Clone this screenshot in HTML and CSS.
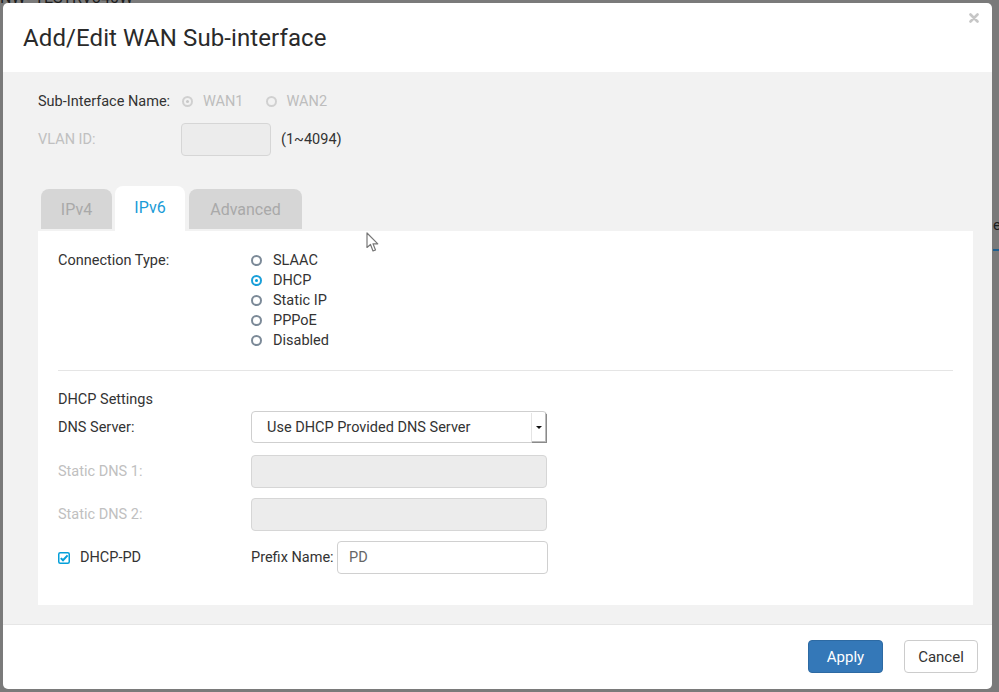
FILE: index.html
```html
<!DOCTYPE html>
<html>
<head>
<meta charset="utf-8">
<link rel="stylesheet" href="styles.css">
</head>
<body>
<div class="backdrop">
  <span class="bg-top">NW=TESTRV340W</span>
  <span class="bg-right">e</span>
  <span class="bg-line"></span>
</div>
<div class="modal">
  <div class="modal-header">
    <h1 class="title">Add/Edit WAN Sub-interface</h1>
    <span class="close"><svg width="10" height="10" viewBox="0 0 10 10"><path d="M1.5 1.5 L8.5 8.5 M8.5 1.5 L1.5 8.5" stroke="#c6c6c6" stroke-width="2.6" stroke-linecap="round"/></svg></span>
  </div>
  <div class="modal-body">
    <div class="row row-name">
      <span class="lbl lbl-top">Sub-Interface Name:</span>
      <span class="radio-item disabled"><span class="radio checked"></span>WAN1</span>
      <span class="radio-item disabled wan2"><span class="radio"></span>WAN2</span>
    </div>
    <div class="row row-vlan">
      <span class="lbl lbl-top disabled-text">VLAN ID:</span>
      <span class="input input-vlan disabled-input"></span>
      <span class="hint">(1~4094)</span>
    </div>
    <div class="tabs">
      <span class="tab tab-ipv4">IPv4</span>
      <span class="tab active">IPv6</span>
      <span class="tab tab-adv">Advanced</span>
    </div>
    <div class="panel">
      <div class="conn">
        <span class="lbl lbl-panel">Connection Type:</span>
        <div class="radio-list">
          <span class="radio-item"><span class="radio"></span>SLAAC</span>
          <span class="radio-item"><span class="radio checked"></span>DHCP</span>
          <span class="radio-item"><span class="radio"></span>Static IP</span>
          <span class="radio-item"><span class="radio"></span>PPPoE</span>
          <span class="radio-item"><span class="radio"></span>Disabled</span>
        </div>
      </div>
      <div class="divider"></div>
      <div class="section-title">DHCP Settings</div>
      <div class="frow frow-dns">
        <span class="lbl lbl-panel">DNS Server:</span>
        <span class="select">
          <span class="select-text">Use DHCP Provided DNS Server</span>
          <span class="select-btn"><span class="caret"></span></span>
        </span>
      </div>
      <div class="frow frow-s1">
        <span class="lbl lbl-panel disabled-text">Static DNS 1:</span>
        <span class="input input-wide disabled-input"></span>
      </div>
      <div class="frow frow-s2">
        <span class="lbl lbl-panel disabled-text">Static DNS 2:</span>
        <span class="input input-wide disabled-input"></span>
      </div>
      <div class="frow frow-pd">
        <span class="lbl lbl-panel pd-label">
          <span class="checkbox">
            <svg width="12" height="12" viewBox="0 0 12 12"><rect x="0.75" y="0.75" width="10.5" height="10.5" rx="1.5" fill="#fff" stroke="#049fd9" stroke-width="1.5"/><path d="M2.8 6.1 L5 8.3 L9.6 3.4" fill="none" stroke="#049fd9" stroke-width="2"/></svg>
          </span>
          DHCP-PD
        </span>
        <span class="prefix-label">Prefix Name:</span>
        <span class="input input-prefix">PD</span>
      </div>
    </div>
  </div>
  <div class="modal-footer">
    <button class="btn btn-primary">Apply</button>
    <button class="btn btn-default">Cancel</button>
  </div>
</div>
<svg class="cursor" width="14" height="22" viewBox="0 0 14 22"><path d="M1 1 L1 15.5 L4.5 12.5 L7 19 L9.5 18 L7 11.8 L11.8 11.8 Z" fill="#fff" stroke="#777" stroke-width="1.2" stroke-linejoin="round"/></svg>
</body>
</html>
```

FILE: styles.css
```css
html, body {
  margin: 0;
  padding: 0;
}
body {
  width: 999px;
  height: 692px;
  background: #7a7a7a;
  font-family: Roboto, "Liberation Sans", Arial, sans-serif;
  font-size: 14.5px;
  color: #333;
  position: relative;
  overflow: hidden;
}
.backdrop {
  position: absolute;
  inset: 0;
}
.bg-top {
  position: absolute;
  left: 0;
  top: -12px;
  font-size: 16px;
  color: #1c1c1c;
  white-space: nowrap;
}
.bg-right {
  position: absolute;
  left: 993px;
  top: 216px;
  font-size: 15px;
  color: #1c1c1c;
}
.bg-line {
  position: absolute;
  left: 993px;
  top: 249px;
  width: 6px;
  height: 2px;
  background: #1f5f8f;
}
.modal {
  position: relative;
  margin: 3px 0 0 3px;
  width: 989px;
  height: 686px;
  background: #fff;
  border-radius: 5px;
  display: flex;
  flex-direction: column;
  overflow: hidden;
}
.modal-header {
  height: 69px;
  flex: none;
  display: flex;
  align-items: center;
  padding-left: 20px;
  position: relative;
}
.title {
  margin: 0;
  font-size: 24px;
  font-weight: 400;
  color: #2a2a2a;
  letter-spacing: 0.1px;
}
.close {
  position: absolute;
  top: 10px;
  right: 13px;
  display: flex;
}
.modal-body {
  flex: 1;
  background: #f2f2f2;
  padding: 19px 19px 19px 35px;
  border-bottom: 1px solid #e6e6e6;
  display: flex;
  flex-direction: column;
}
.row {
  display: flex;
  align-items: center;
}
.row-name {
  height: 20px;
}
.lbl-top {
  width: 143px;
  flex: none;
}
.row-name .lbl-top {
  width: 144px;
}
.radio-item {
  display: flex;
  align-items: center;
  height: 20px;
  color: #333;
}
.radio {
  width: 11px;
  height: 11px;
  border: 2px solid #7c8a98;
  border-radius: 50%;
  box-sizing: border-box;
  margin-right: 10px;
  margin-left: 0;
  position: relative;
  flex: none;
}
.radio.checked {
  border-color: #1a9fd9;
}
.radio.checked::after {
  content: "";
  position: absolute;
  left: 50%;
  top: 50%;
  width: 3px;
  height: 3px;
  margin: -1.5px 0 0 -1.5px;
  border-radius: 50%;
  background: #049fd9;
}
.radio-item.disabled {
  color: #bdbdbd;
}
.radio-item.disabled .radio {
  border-color: #d0d0d0;
}
.radio-item.disabled .radio.checked::after {
  background: #c8c8c8;
}
.wan2 {
  margin-left: 22px;
}
.row-vlan {
  margin-top: 12px;
  height: 33px;
}
.disabled-text {
  color: #c0c0c0;
}
.input {
  box-sizing: border-box;
  border: 1px solid #d0d0d0;
  border-radius: 4px;
  height: 33px;
  background: #fff;
  display: flex;
  align-items: center;
}
.disabled-input {
  background: #ececec;
  border-color: #d6d6d6;
}
.input-vlan {
  width: 90px;
}
.hint {
  margin-left: 10px;
  color: #333;
}
.tabs {
  margin-top: 30px;
  height: 45px;
  display: flex;
  align-items: flex-end;
  padding-left: 3px;
}
.tab {
  box-sizing: border-box;
  height: 40px;
  margin-bottom: 2px;
  background: #d6d6d6;
  border-radius: 8px 8px 0 0;
  color: #a9a9a9;
  font-size: 16px;
  display: flex;
  align-items: center;
  justify-content: center;
}
.tab-ipv4 {
  width: 71px;
  margin-right: 3px;
}
.tab.active {
  width: 70px;
  height: 45px;
  margin-bottom: 0;
  background: #fff;
  color: #1a9bd7;
  margin-right: 4px;
  padding-bottom: 2px;
}
.tab-adv {
  width: 113px;
}
.panel {
  flex: 1;
  background: #fff;
  padding: 19px 20px 0 20px;
  display: flex;
  flex-direction: column;
}
.conn {
  display: flex;
}
.lbl-panel {
  width: 193px;
  flex: none;
  height: 20px;
  display: flex;
  align-items: center;
}
.radio-list {
  display: flex;
  flex-direction: column;
}
.radio-list .radio {
  margin-left: 0;
  margin-right: 11px;
}
.divider {
  margin-top: 20px;
  height: 1px;
  background: #e5e5e5;
}
.section-title {
  margin-top: 19px;
  height: 20px;
  line-height: 20px;
}
.frow {
  display: flex;
  align-items: center;
  height: 33px;
}
.frow-dns {
  margin-top: 1px;
  height: 32px;
}
.frow-s1 {
  margin-top: 12px;
  height: 32px;
}
.frow-s2 {
  margin-top: 11px;
}
.frow-pd {
  margin-top: 10px;
}
.select {
  box-sizing: border-box;
  width: 296px;
  height: 32px;
  border: 1px solid #cfcfcf;
  border-radius: 4px;
  display: flex;
  align-items: stretch;
  background: #fff;
}
.select-text {
  flex: 1;
  display: flex;
  align-items: center;
  padding-left: 15px;
  color: #333;
}
.select-btn {
  width: 14px;
  margin: 1px 0 0 0;
  border-left: 1px solid #e4e4e4;
  box-shadow: 1px 1px 0 #8a8a8a, inset -1px -1px 0 #bcbcbc;
  display: flex;
  align-items: center;
  justify-content: center;
}
.caret {
  width: 0;
  height: 0;
  border-left: 3px solid transparent;
  border-right: 3px solid transparent;
  border-top: 3px solid #111;
}
.input-wide {
  width: 296px;
}
.pd-label {
  gap: 10px;
}
.checkbox {
  display: flex;
  width: 12px;
  height: 12px;
}
.prefix-label {
  width: 86px;
  flex: none;
}
.input-prefix {
  width: 211px;
  padding-left: 11px;
  color: #666;
}
.modal-footer {
  height: 64px;
  flex: none;
  display: flex;
  justify-content: flex-end;
  align-items: flex-start;
  padding: 15px 14px 0 0;
  box-sizing: border-box;
  gap: 21px;
}
.btn {
  height: 33px;
  border-radius: 4px;
  font-family: inherit;
  font-size: 15px;
  padding: 0;
  cursor: default;
}
.btn-primary {
  width: 75px;
  background: #3478b8;
  border: 1px solid #2d6aa3;
  color: #fff;
}
.btn-default {
  width: 74px;
  background: #fff;
  border: 1px solid #cccccc;
  color: #333;
}
.cursor {
  position: absolute;
  left: 366px;
  top: 232px;
}
```
